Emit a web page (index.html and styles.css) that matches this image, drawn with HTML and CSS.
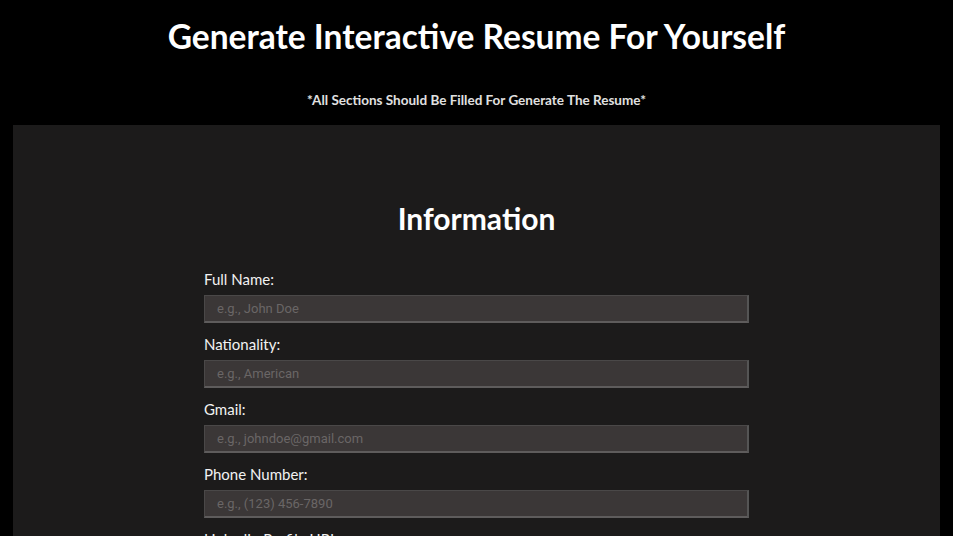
FILE: index.html
```html
<!DOCTYPE html>
<html lang="en">
<head>
<meta charset="utf-8">
<title>Generate Interactive Resume</title>
<link rel="stylesheet" href="styles.css">
</head>
<body>
<header class="top">
  <h1 class="title">Generate Interactive Resume For Yourself</h1>
  <p class="note">*All Sections Should Be Filled For Generate The Resume*</p>
</header>
<main class="panel">
  <h2 class="section-title">Information</h2>
  <form class="form">
    <div class="field">
      <label class="label" for="name">Full Name:</label>
      <input class="input" id="name" type="text" placeholder="e.g., John Doe">
    </div>
    <div class="field">
      <label class="label" for="nat">Nationality:</label>
      <input class="input" id="nat" type="text" placeholder="e.g., American">
    </div>
    <div class="field">
      <label class="label" for="mail">Gmail:</label>
      <input class="input" id="mail" type="text" placeholder="e.g., johndoe@gmail.com">
    </div>
    <div class="field">
      <label class="label" for="phone">Phone Number:</label>
      <input class="input" id="phone" type="text" placeholder="e.g., (123) 456-7890">
    </div>
    <div class="field">
      <label class="label" for="li">LinkedIn Profile URL:</label>
      <input class="input" id="li" type="text" placeholder="e.g., linkedin.com/in/johndoe">
    </div>
  </form>
</main>
</body>
</html>
```

FILE: styles.css
```css
* { box-sizing: border-box; }
html, body { margin: 0; padding: 0; }
body {
  background: #000;
  color: #fff;
  font-family: "Lato", "Open Sans", sans-serif;
}
.top {
  text-align: center;
  padding-top: 16px;
  height: 125px;
}
.title {
  margin: 0;
  font-size: 33.5px;
  font-weight: 700;
  line-height: 40px;
  color: #fff;
}
.note {
  margin: 36px 0 0;
  font-size: 13.5px;
  font-weight: 700;
  line-height: 16px;
  color: #e0e0e0;
}
.panel {
  margin: 0 13px;
  background: #1c1b1b;
  padding-top: 74px;
  min-height: 600px;
}
.section-title {
  margin: 0 0 33px;
  text-align: center;
  font-size: 30px;
  font-weight: 700;
  line-height: 38px;
  color: #fff;
}
.form {
  width: 545px;
  margin: 0 auto;
  display: flex;
  flex-direction: column;
  gap: 12px;
}
.field {
  display: flex;
  flex-direction: column;
  gap: 7px;
}
.label {
  font-size: 15px;
  line-height: 18px;
  color: #f2f2f2;
}
.input {
  height: 28px;
  width: 100%;
  background: #3b3737;
  border: 1px solid #4a4848;
  border-bottom: 2px solid #5e5c5c;
  border-right: 2px solid #555;
  padding: 0 12px;
  color: #ddd;
  font-family: "Roboto", "Liberation Sans", sans-serif;
  font-size: 13px;
  outline: none;
}
.input::placeholder { color: #6a6666; }
```
